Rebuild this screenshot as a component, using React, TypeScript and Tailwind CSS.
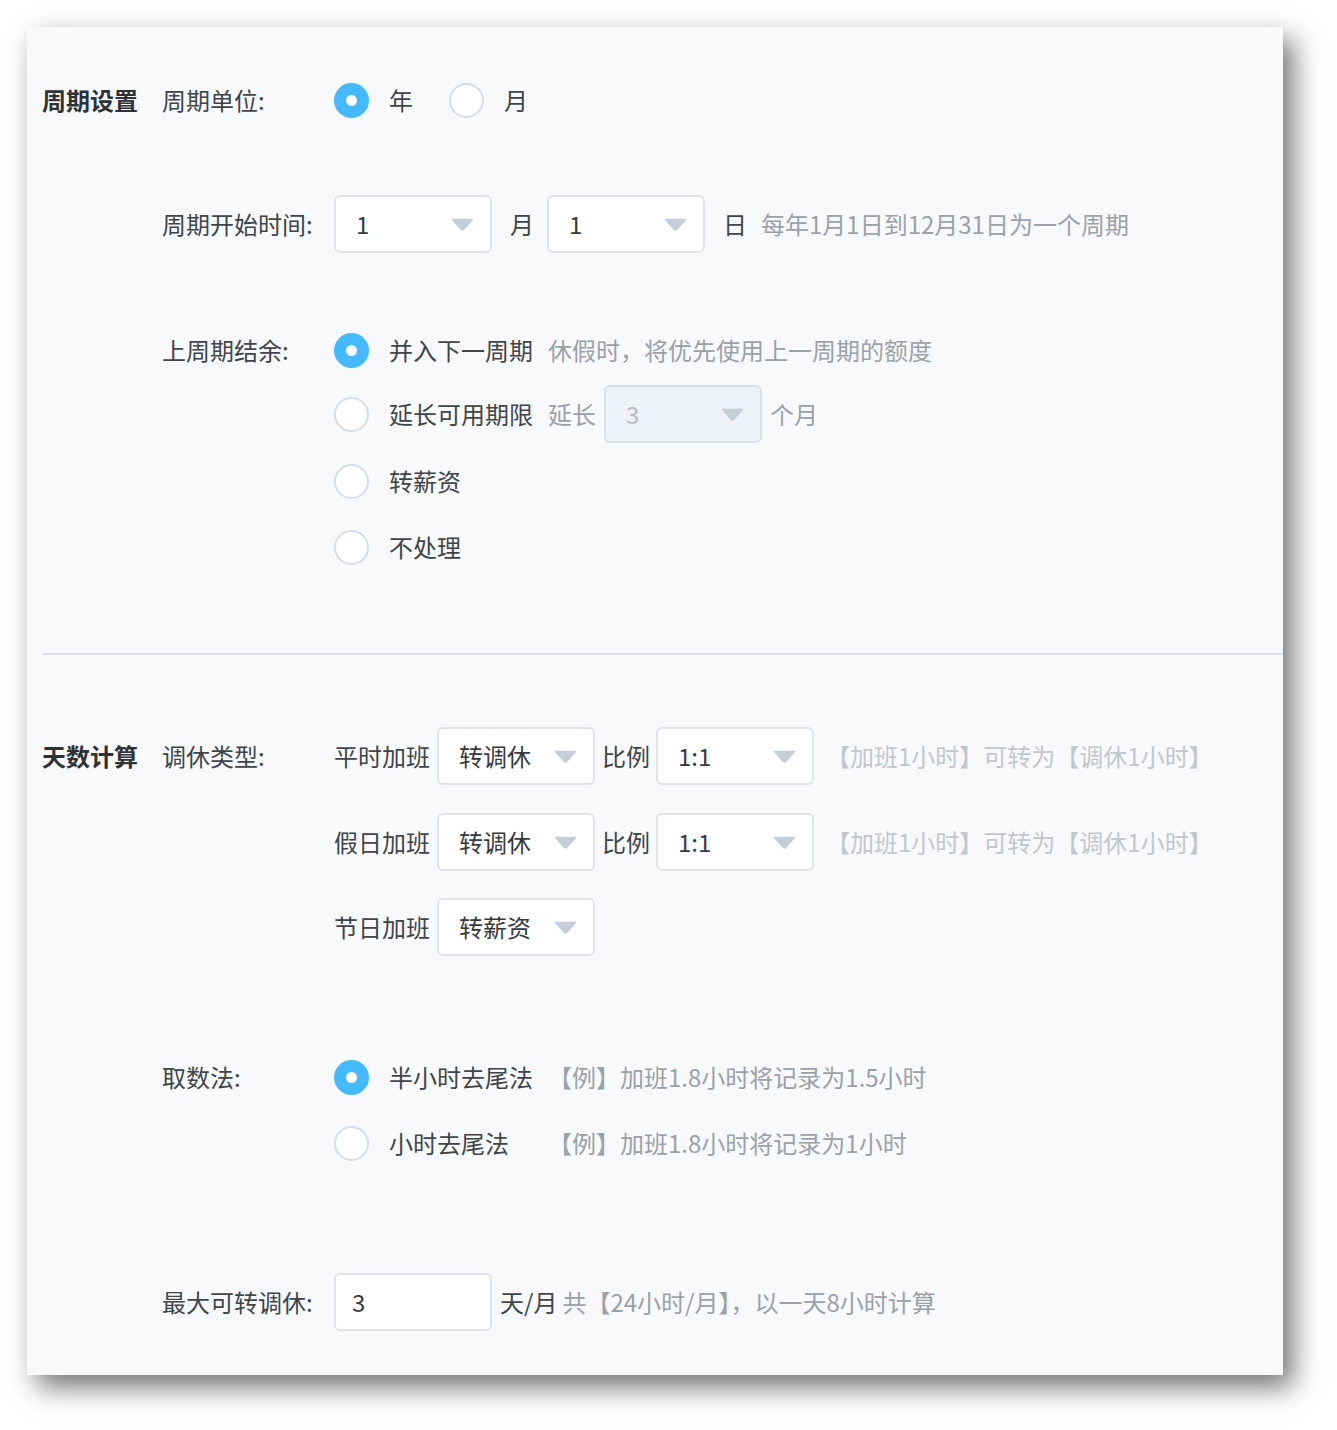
import React from "react";

const FONT = { fontFamily: '"Noto Sans CJK SC", "Noto Sans", sans-serif' };

function Caret({ color = "#c3ced9" }: { color?: string }) {
  return (
    <svg width="23" height="13" viewBox="0 0 23 13" className="shrink-0">
      <path d="M1.5 1.5 L21.5 1.5 L12.6 11.4 Q11.5 12.5 10.4 11.4 Z" fill={color} stroke={color} strokeWidth="1.5" strokeLinejoin="round" />
    </svg>
  );
}

function Radio({ checked }: { checked?: boolean }) {
  return checked ? (
    <span className="flex h-[35px] w-[35px] shrink-0 items-center justify-center rounded-full bg-[#45b9fd]">
      <span className="h-[11px] w-[11px] rounded-full bg-white" />
    </span>
  ) : (
    <span className="h-[35px] w-[35px] shrink-0 rounded-full border-2 border-[#d5dde5] bg-white" />
  );
}

function Select({ value, disabled }: { value: string; disabled?: boolean }) {
  return (
    <div
      className={
        disabled
          ? "flex h-[58px] w-[158px] shrink-0 items-center justify-between rounded-[6px] border-2 border-[#d9e0e7] bg-[#eef1f5] pl-[20px] pr-[16px] text-[#b4bbc3]"
          : "flex h-[58px] w-[158px] shrink-0 items-center justify-between rounded-[6px] border-2 border-[#e0e4ea] bg-white pl-[20px] pr-[16px] text-[#363a3e]"
      }
    >
      <span>{value}</span>
      <Caret />
    </div>
  );
}

export default function App() {
  return (
    <div className="min-h-[1430px] bg-white pl-[27px] pt-[27px]" style={FONT}>
      <div className="flex w-[1256px] flex-col bg-[#f8f9fb] pb-[44px] pl-[15px] pt-[44px] text-[24px] leading-none text-[#404549] shadow-[10px_12px_26px_rgba(0,0,0,0.55)]">
        {/* Row A */}
        <div className="flex h-[58px] items-center">
          <div className="w-[120px] font-bold text-[#2e3236]">周期设置</div>
          <div className="w-[172px]">周期单位:</div>
          <Radio checked />
          <span className="ml-[20px] mr-[36px]">年</span>
          <Radio />
          <span className="ml-[20px]">月</span>
        </div>

        {/* Row B */}
        <div className="mt-[66px] flex h-[58px] items-center pl-[120px]">
          <div className="w-[172px]">周期开始时间:</div>
          <Select value="1" />
          <span className="ml-[18px] mr-[13px]">月</span>
          <Select value="1" />
          <span className="ml-[18px]">日</span>
          <span className="ml-[14px] text-[#9ba1a8]">每年1月1日到12月31日为一个周期</span>
        </div>

        {/* Row C */}
        <div className="mt-[68px] flex h-[58px] items-center pl-[120px]">
          <div className="w-[172px]">上周期结余:</div>
          <Radio checked />
          <span className="ml-[20px] w-[144px]">并入下一周期</span>
          <span className="ml-[15px] text-[#9ba1a8]">休假时，将优先使用上一周期的额度</span>
        </div>

        {/* Row D */}
        <div className="mt-[6px] flex h-[58px] items-center pl-[292px]">
          <Radio />
          <span className="ml-[20px] w-[144px]">延长可用期限</span>
          <span className="ml-[15px] mr-[8px] text-[#9ba1a8]">延长</span>
          <Select value="3" disabled />
          <span className="ml-[8px] text-[#9ba1a8]">个月</span>
        </div>

        {/* Row E */}
        <div className="mt-[9px] flex h-[58px] items-center pl-[292px]">
          <Radio />
          <span className="ml-[20px]">转薪资</span>
        </div>

        {/* Row F */}
        <div className="mt-[8px] flex h-[58px] items-center pl-[292px]">
          <Radio />
          <span className="ml-[20px]">不处理</span>
        </div>

        <div className="mt-[77px] h-[2px] bg-[#dbe1e8]" />

        {/* Row G */}
        <div className="mt-[72px] flex h-[58px] items-center">
          <div className="w-[120px] font-bold text-[#2e3236]">天数计算</div>
          <div className="w-[172px]">调休类型:</div>
          <span className="mr-[7px]">平时加班</span>
          <Select value="转调休" />
          <span className="ml-[7px] mr-[6px]">比例</span>
          <Select value="1:1" />
          <span className="ml-[12px] text-[#c2c7cd]">【加班1小时】可转为【调休1小时】</span>
        </div>

        {/* Row H */}
        <div className="mt-[28px] flex h-[58px] items-center pl-[292px]">
          <span className="mr-[7px]">假日加班</span>
          <Select value="转调休" />
          <span className="ml-[7px] mr-[6px]">比例</span>
          <Select value="1:1" />
          <span className="ml-[12px] text-[#c2c7cd]">【加班1小时】可转为【调休1小时】</span>
        </div>

        {/* Row I */}
        <div className="mt-[27px] flex h-[58px] items-center pl-[292px]">
          <span className="mr-[7px]">节日加班</span>
          <Select value="转薪资" />
        </div>

        {/* Row J */}
        <div className="mt-[92px] flex h-[58px] items-center pl-[120px]">
          <div className="w-[172px]">取数法:</div>
          <Radio checked />
          <span className="ml-[20px] w-[144px]">半小时去尾法</span>
          <span className="ml-[15px] text-[#9ba1a8]">【例】加班1.8小时将记录为1.5小时</span>
        </div>

        {/* Row K */}
        <div className="mt-[8px] flex h-[58px] items-center pl-[292px]">
          <Radio />
          <span className="ml-[20px] w-[144px]">小时去尾法</span>
          <span className="ml-[15px] text-[#9ba1a8]">【例】加班1.8小时将记录为1小时</span>
        </div>

        {/* Row L */}
        <div className="mt-[101px] flex h-[58px] items-center pl-[120px]">
          <div className="w-[172px]">最大可转调休:</div>
          <div className="flex h-[58px] w-[158px] shrink-0 items-center rounded-[6px] border-2 border-[#e0e4ea] bg-white pl-[16px] text-[#363a3e]">
            3
          </div>
          <span className="ml-[8px]">天/月</span>
          <span className="ml-[5px] text-[#9ba1a8]">共【24小时/月】，以一天8小时计算</span>
        </div>
      </div>
    </div>
  );
}
